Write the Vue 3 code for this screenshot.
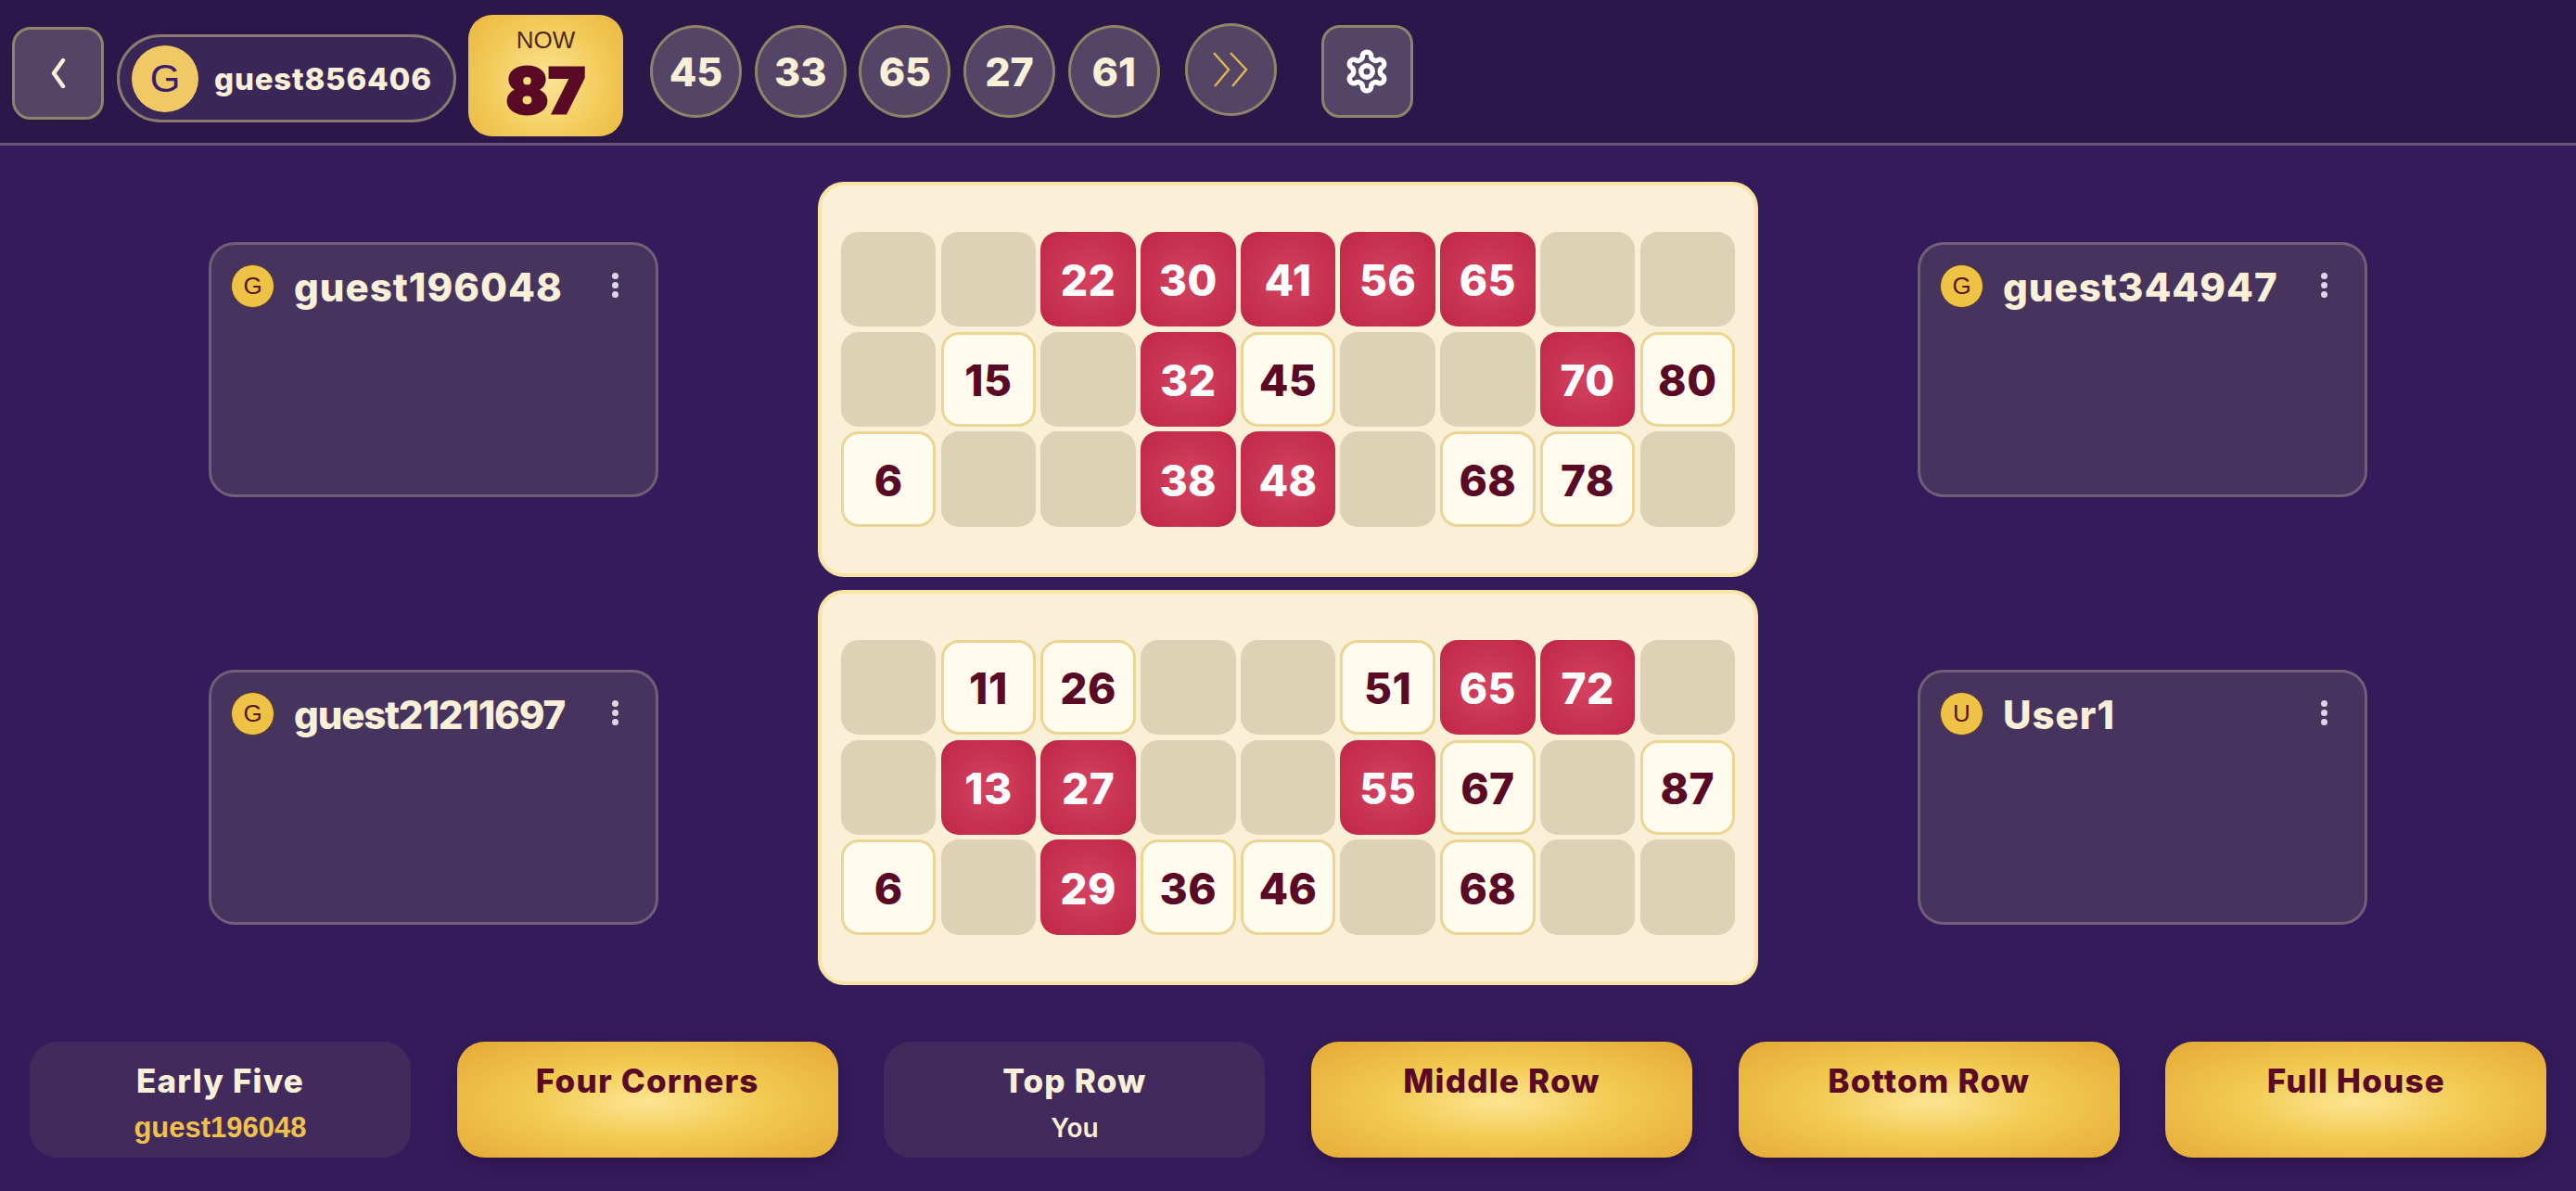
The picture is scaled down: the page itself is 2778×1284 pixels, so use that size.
<script setup>
const balls = [45, 33, 65, 27, 61]
const leftPlayers = [
  { initial: 'G', name: 'guest196048' },
  { initial: 'G', name: 'guest21211697', tight: true }
]
const rightPlayers = [
  { initial: 'G', name: 'guest344947' },
  { initial: 'U', name: 'User1' }
]
const c = (v, m) => ({ v, m })
const e = { v: null, m: false }
const m = v => c(v, true)
const n = v => c(v, false)
const tickets = [
  [e, e, m(22), m(30), m(41), m(56), m(65), e, e,
   e, n(15), e, m(32), n(45), e, e, m(70), n(80),
   n(6), e, e, m(38), m(48), e, n(68), n(78), e],
  [e, n(11), n(26), e, e, n(51), m(65), m(72), e,
   e, m(13), m(27), e, e, m(55), n(67), e, n(87),
   n(6), e, m(29), n(36), n(46), e, n(68), e, e]
]
const prizes = [
  { title: 'Early Five', winner: 'guest196048', cls: 'won-gold' },
  { title: 'Four Corners' },
  { title: 'Top Row', winner: 'You', cls: 'won-you' },
  { title: 'Middle Row' },
  { title: 'Bottom Row' },
  { title: 'Full House' }
]
const cellClass = cell => cell.v === null ? 'empty' : cell.m ? 'marked' : 'open'
</script>

<template>
  <div class="page">
    <header class="topbar">
      <button class="square back" aria-label="Back">
        <svg viewBox="0 0 16 32" width="16" height="32"><path d="M13 2 3 16l10 14" fill="none" stroke="#faf0d8" stroke-width="4.5" stroke-linecap="round" stroke-linejoin="round"/></svg>
      </button>
      <div class="pill">
        <span class="pill-avatar">G</span>
        <span class="pill-name">guest856406</span>
      </div>
      <div class="now">
        <span class="now-label">NOW</span>
        <span class="now-num">87</span>
      </div>
      <div class="balls">
        <span v-for="b in balls" :key="b" class="ball">{{ b }}</span>
      </div>
      <button class="ball more" aria-label="More">
        <svg viewBox="0 0 38 38" width="38" height="38"><path d="M1 1l16 18L2 37M19 1l17 18-15 18" fill="none" stroke="#dfb64f" stroke-width="2.4"/></svg>
      </button>
      <button class="square gear" aria-label="Settings">
        <svg viewBox="0 0 24 24" width="50" height="50" fill="none" stroke="#fff" stroke-width="2.6" stroke-linecap="round" stroke-linejoin="round"><path d="M12.22 2h-.44a2 2 0 0 0-2 2v.18a2 2 0 0 1-1 1.73l-.43.25a2 2 0 0 1-2 0l-.15-.08a2 2 0 0 0-2.73.73l-.22.38a2 2 0 0 0 .73 2.73l.15.1a2 2 0 0 1 1 1.72v.51a2 2 0 0 1-1 1.74l-.15.09a2 2 0 0 0-.73 2.73l.22.38a2 2 0 0 0 2.73.73l.15-.08a2 2 0 0 1 2 0l.43.25a2 2 0 0 1 1 1.73V20a2 2 0 0 0 2 2h.44a2 2 0 0 0 2-2v-.18a2 2 0 0 1 1-1.73l.43-.25a2 2 0 0 1 2 0l.15.08a2 2 0 0 0 2.73-.73l.22-.39a2 2 0 0 0-.73-2.73l-.15-.08a2 2 0 0 1-1-1.74v-.5a2 2 0 0 1 1-1.74l.15-.09a2 2 0 0 0 .73-2.73l-.22-.38a2 2 0 0 0-2.73-.73l-.15.08a2 2 0 0 1-2 0l-.43-.25a2 2 0 0 1-1-1.73V4a2 2 0 0 0-2-2z"/><circle cx="12" cy="12" r="3"/></svg>
      </button>
    </header>

    <main class="board">
      <section class="players">
        <article v-for="p in leftPlayers" :key="p.name" class="player">
          <span class="p-avatar">{{ p.initial }}</span>
          <span class="p-name" :class="{ tight: p.tight }">{{ p.name }}</span>
          <span class="dots"><i></i><i></i><i></i></span>
        </article>
      </section>

      <section class="tickets">
        <div v-for="(t, ti) in tickets" :key="ti" class="ticket">
          <div class="grid">
            <div v-for="(cell, i) in t" :key="i" class="cell" :class="cellClass(cell)">{{ cell.v }}</div>
          </div>
        </div>
      </section>

      <section class="players">
        <article v-for="p in rightPlayers" :key="p.name" class="player">
          <span class="p-avatar">{{ p.initial }}</span>
          <span class="p-name">{{ p.name }}</span>
          <span class="dots"><i></i><i></i><i></i></span>
        </article>
      </section>
    </main>

    <footer class="prizes">
      <div v-for="p in prizes" :key="p.title" class="prize" :class="p.winner ? 'claimed' : 'gold'">
        <span class="prize-title">{{ p.title }}</span>
        <span v-if="p.winner" class="prize-winner" :class="p.cls">{{ p.winner }}</span>
      </div>
    </footer>
  </div>
</template>

<style>
html, body { margin: 0; background: #341c5c; }
</style>

<style scoped>
.page {
  width: 2778px;
  height: 1284px;
  overflow: hidden;
  background: #341c5c;
  font-family: Inter, "Noto Sans", sans-serif;
  display: flex;
  flex-direction: column;
}
button { padding: 0; font: inherit; cursor: pointer; }

.topbar {
  box-sizing: border-box;
  height: 157px;
  flex: none;
  background: #2b1749;
  border-bottom: 3px solid #6a5574;
  display: flex;
  align-items: flex-start;
  padding-left: 13px;
}
.square, .ball {
  box-sizing: border-box;
  width: 99px;
  height: 100px;
  background: #544566;
  border: 3px solid #8f8468;
  display: flex;
  align-items: center;
  justify-content: center;
  flex: none;
}
.square { border-radius: 20px; }
.back { margin-top: 29px; }
.pill {
  box-sizing: border-box;
  margin: 37px 0 0 14px;
  width: 366px;
  height: 95px;
  border-radius: 48px;
  border: 3px solid #8a7b70;
  background: #3a2757;
  display: flex;
  align-items: center;
  padding-left: 13px;
  flex: none;
}
.pill-avatar {
  width: 72px;
  height: 72px;
  border-radius: 50%;
  background: #f0c965;
  color: #3b1d6e;
  font-family: "Liberation Sans", sans-serif;
  font-size: 42px;
  display: flex;
  align-items: center;
  justify-content: center;
}
.pill-name {
  margin-left: 17px;
  color: #faf0d8;
  font-size: 33px;
  font-weight: 800;
  letter-spacing: 0.8px;
}
.now {
  box-sizing: border-box;
  margin: 16px 0 0 13px;
  width: 167px;
  height: 131px;
  border-radius: 26px;
  background: radial-gradient(circle at 50% 55%, #fbe596 0%, #f3cb5a 55%, #e9b63f 100%);
  display: flex;
  flex-direction: column;
  align-items: center;
  flex: none;
}
.now-label {
  margin-top: 14px;
  font-family: "Liberation Sans", sans-serif;
  font-size: 26px;
  line-height: 26px;
  color: #4d2a2a;
}
.now-num {
  margin-top: 8px;
  font-size: 67px;
  line-height: 68px;
  font-weight: 900;
  color: #5a0a24;
  -webkit-text-stroke: 3px #5a0a24;
}
.balls {
  margin: 27px 0 0 29px;
  display: flex;
  gap: 13.7px;
  flex: none;
}
.ball {
  border-radius: 50%;
  color: #faf0d8;
  font-size: 43px;
  font-weight: 800;
}
.more { margin: 25px 0 0 27px; }
.gear { margin: 27px 0 0 48px; }

.board {
  flex: none;
  height: 966px;
  box-sizing: border-box;
  padding: 39px 0 0 225px;
  display: flex;
  gap: 172px;
  align-items: flex-start;
}
.players {
  box-sizing: border-box;
  width: 485px;
  padding-top: 65px;
  display: flex;
  flex-direction: column;
  gap: 186px;
  flex: none;
}
.player {
  box-sizing: border-box;
  height: 275px;
  border-radius: 28px;
  border: 3px solid #715f78;
  background: #46345f;
  display: flex;
  align-items: flex-start;
  padding: 21px 0 0 21px;
}
.p-avatar {
  box-sizing: border-box;
  width: 47px;
  height: 47px;
  border-radius: 50%;
  background: #eec244;
  border: 1.5px solid #5a3a2e;
  color: #5a1420;
  font-family: "Liberation Sans", sans-serif;
  font-size: 26px;
  display: flex;
  align-items: center;
  justify-content: center;
  flex: none;
}
.p-name {
  margin-left: 21px;
  color: #faf0d8;
  font-size: 42px;
  line-height: 50px;
  font-weight: 800;
  letter-spacing: 1px;
  flex: none;
  width: 343px;
}
.p-name.tight { letter-spacing: -1.2px; }
.dots {
  display: flex;
  flex-direction: column;
  gap: 3px;
  margin-top: 9px;
}
.dots i {
  display: block;
  width: 7px;
  height: 7px;
  border-radius: 50%;
  background: #dcd6e6;
}

.tickets {
  width: 1014px;
  display: flex;
  flex-direction: column;
  gap: 14px;
  flex: none;
}
.ticket {
  box-sizing: border-box;
  height: 426px;
  border: 4px solid #fae3a3;
  border-radius: 28px;
  background: #faf0d8;
  padding: 50px 21px;
}
.grid {
  display: grid;
  grid-template-columns: repeat(9, 1fr);
  grid-auto-rows: 102.4px;
  gap: 5.3px;
}
.cell {
  box-sizing: border-box;
  border-radius: 19px;
  display: flex;
  align-items: center;
  justify-content: center;
  padding-top: 2px;
  font-size: 46px;
  font-weight: 800;
  letter-spacing: 0.5px;
}
.empty { background: #ddd1b6; }
.open {
  background: #fffbef;
  border: 3px solid #ebd594;
  color: #5a0a24;
}
.marked {
  background: radial-gradient(circle at 50% 50%, #d4425f 0%, #bf2647 100%);
  color: #fff;
}

.prizes {
  flex: none;
  box-sizing: border-box;
  padding-left: 32px;
  display: flex;
  gap: 49.7px;
}
.prize {
  box-sizing: border-box;
  width: 411px;
  height: 125px;
  border-radius: 30px;
  display: flex;
  flex-direction: column;
  align-items: center;
  padding-top: 20px;
  flex: none;
}
.claimed { background: #432a5c; color: #faf0d8; }
.gold {
  background: radial-gradient(ellipse at 50% 52%, #fce593 0%, #f2c94f 45%, #e4a935 100%);
  color: #5a0a24;
  box-shadow: 0 6px 14px rgba(30, 10, 50, .4);
}
.prize-title {
  font-size: 35px;
  line-height: 44px;
  font-weight: 800;
  letter-spacing: 1.2px;
}
.prize-winner {
  margin-top: 11px;
  line-height: 36px;
}
.won-gold {
  color: #eec24c;
  font-family: "Liberation Sans", sans-serif;
  font-size: 31px;
  font-weight: 700;
}
.won-you {
  color: #faf0d8;
  font-size: 28px;
  font-weight: 600;
}
</style>
